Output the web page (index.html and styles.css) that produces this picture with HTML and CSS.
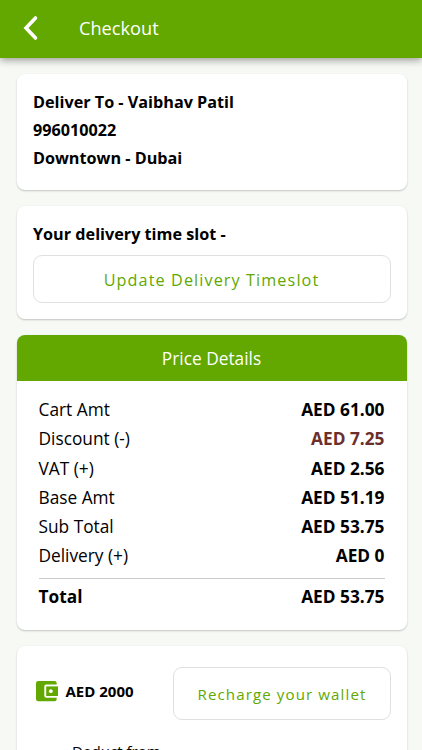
FILE: index.html
```html
<!DOCTYPE html>
<html lang="en">

<head>
    <meta charset="UTF-8">
    <meta name="viewport" content="width=device-width, initial-scale=1.0">
    <title>Checkout</title>
    <link rel="stylesheet" href="styles.css">
</head>

<body>
    <header class="app-bar">
        <svg class="back-icon" width="16" height="26" viewBox="0 0 16 26">
            <path d="M12.500 3 L3 13 L12.500 23" />
        </svg>
        <h1>Checkout</h1>
    </header>

    <main>
        <section class="card address">
            <p>Deliver To - Vaibhav Patil</p>
            <p>996010022</p>
            <p>Downtown - Dubai</p>
        </section>

        <section class="card timeslot">
            <h2>Your delivery time slot -</h2>
            <button class="outline-button">Update Delivery Timeslot</button>
        </section>

        <section class="card price">
            <h2>Price Details</h2>
            <div class="price-list">
                <div class="row"><span>Cart Amt</span><strong>AED 61.00</strong></div>
                <div class="row"><span>Discount (-)</span><strong class="discount">AED 7.25</strong></div>
                <div class="row"><span>VAT (+)</span><strong>AED 2.56</strong></div>
                <div class="row"><span>Base Amt</span><strong>AED 51.19</strong></div>
                <div class="row"><span>Sub Total</span><strong>AED 53.75</strong></div>
                <div class="row"><span>Delivery (+)</span><strong>AED 0</strong></div>
                <div class="row total"><strong>Total</strong><strong>AED 53.75</strong></div>
            </div>
        </section>

        <section class="card wallet">
            <div class="wallet-top">
                <svg class="wallet-icon" width="22" height="20" viewBox="0 0 22 20">
                    <path d="M2.200 0H18.500a2.200 2.200 0 0 1 2.200 2.200V3.500H10.300a2 2 0 0 0 -2 2V14.800a2 2 0 0 0 2 2H20.700V18a2.200 2.200 0 0 1 -2.200 2.200H2.200A2.200 2.200 0 0 1 0 18V2.200A2.200 2.200 0 0 1 2.200 0Z" />
                    <path d="M10.200 5.400H22V15H10.200Z" />
                    <circle cx="14.800" cy="10.200" r="1.900" />
                </svg>
                <span class="balance">AED 2000</span>
                <button class="outline-button">Recharge your wallet</button>
            </div>
            <p class="deduct">Deduct from</p>
        </section>
    </main>
</body>

</html>
```
FILE: styles.css
```css
* {
    box-sizing: border-box;
}

body {
    margin: 0;
    height: 750px;
    overflow: hidden;
    background-color: #f7f9f5;
    color: #000;
    font-family: 'Open Sans', 'Noto Sans', sans-serif;
    font-size: 17.3px;
}

h1,
h2,
p {
    margin: 0;
}

.app-bar {
    display: flex;
    align-items: center;
    height: 58px;
    padding: 0 0 2px 23px;
    background-color: #62a800;
    color: #fff;
    box-shadow: 0 2px 8px rgba(0, 0, 0, 0.4);
}

.app-bar h1 {
    margin-left: 40px;
    font-size: 18.2px;
    font-weight: 400;
}

.back-icon path {
    fill: none;
    stroke: #fff;
    stroke-width: 3.6;
    stroke-linecap: round;
}

main {
    display: flex;
    flex-direction: column;
    gap: 16px;
    padding: 16px 15px 0 17px;
}

.card {
    flex-shrink: 0;
    border-radius: 8px;
    background-color: #fff;
    box-shadow: 0 1px 2px rgba(0, 0, 0, 0.22);
}

.address {
    height: 116px;
    padding: 14px 16px;
    font-size: 16.2px;
    font-weight: 700;
    line-height: 28px;
}

.timeslot {
    height: 113px;
    padding: 14px 16px 0;
}

.timeslot h2 {
    font-size: 16.2px;
    line-height: 28px;
}

.outline-button {
    border: 1px solid #e0e0e0;
    border-radius: 9px;
    background-color: #fff;
    color: #62a800;
    font-family: inherit;
    letter-spacing: 1.1px;
}

.timeslot .outline-button {
    width: 100%;
    height: 48px;
    margin-top: 7px;
    padding: 2px 7px 0 6px;
    font-size: 16.2px;
}

.price {
    height: 295px;
    overflow: hidden;
}

.price h2 {
    height: 46px;
    padding-right: 1px;
    background-color: #62a800;
    color: #fff;
    font-size: 17.3px;
    font-weight: 400;
    line-height: 48px;
    text-align: center;
}

.price-list {
    padding: 14px 22.5px 0 21.5px;
}

.row {
    display: flex;
    justify-content: space-between;
    line-height: 29.25px;
}

.row .discount {
    color: #6b2f2c;
}

.total {
    margin-top: 7px;
    padding-top: 3.5px;
    border-top: 1px solid #ccc;
}

.wallet {
    height: 180px;
    padding: 21px 16px 0 19px;
}

.wallet-top {
    display: flex;
    align-items: center;
}

.wallet-icon {
    margin-top: -6px;
    overflow: visible;
}

.wallet-icon path {
    fill: #62a800;
}

.wallet-icon circle {
    fill: #fff;
}

.balance {
    margin: -6px 0 0 7.5px;
    font-size: 15px;
    font-weight: 700;
}

.wallet .outline-button {
    width: 218px;
    height: 53px;
    margin-left: auto;
    padding: 0 6px;
    font-size: 15.1px;
}

.deduct {
    margin: 21px 0 0 36px;
    font-size: 15.1px;
}
```
